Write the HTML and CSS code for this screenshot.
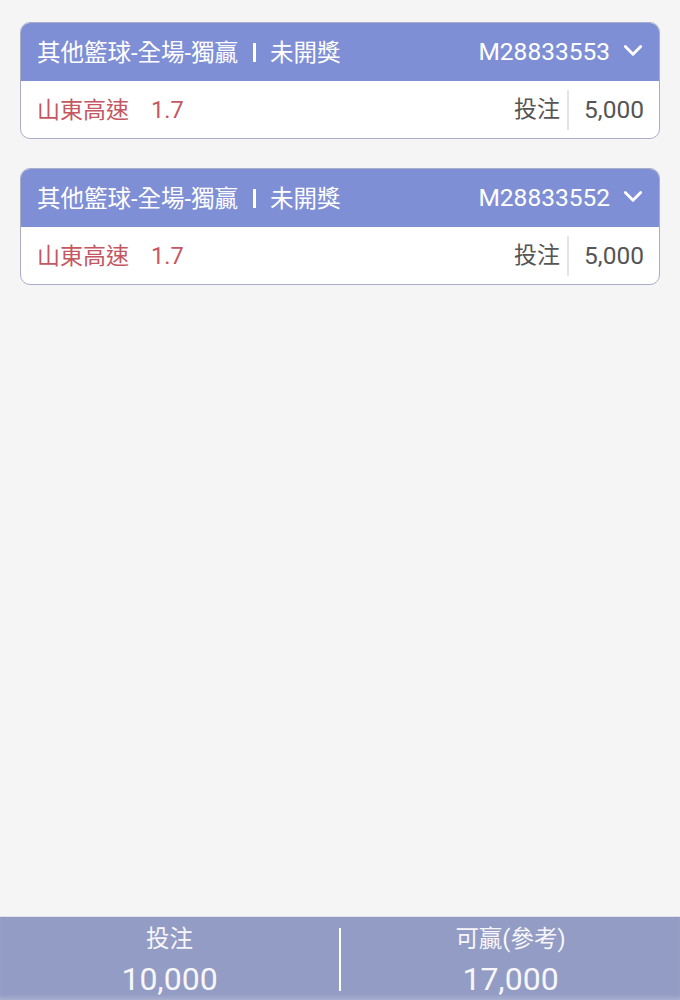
FILE: index.html
```html
<!DOCTYPE html>
<html lang="zh-Hant">
<head>
    <meta charset="UTF-8">
    <meta name="viewport" content="width=device-width, initial-scale=1.0">
    <title>注單</title>
    <link rel="stylesheet" href="styles.css">
</head>
<body>
    <div class="list">
        <div class="card">
            <div class="card-head">
                <span class="title">其他籃球-全場-獨贏<span class="bar"></span>未開獎</span>
                <span class="order">M28833553
                    <svg class="chev" viewBox="0 0 20 20"><path d="M3 6 L10 13 L17 6" /></svg>
                </span>
            </div>
            <div class="card-body">
                <span class="pick">山東高速<span class="odds">1.7</span></span>
                <span class="stake"><span class="label">投注</span><span class="amount">5,000</span></span>
            </div>
        </div>
        <div class="card">
            <div class="card-head">
                <span class="title">其他籃球-全場-獨贏<span class="bar"></span>未開獎</span>
                <span class="order">M28833552
                    <svg class="chev" viewBox="0 0 20 20"><path d="M3 6 L10 13 L17 6" /></svg>
                </span>
            </div>
            <div class="card-body">
                <span class="pick">山東高速<span class="odds">1.7</span></span>
                <span class="stake"><span class="label">投注</span><span class="amount">5,000</span></span>
            </div>
        </div>
    </div>

    <div class="summary">
        <div class="cell">
            <div class="cell-label">投注</div>
            <div class="cell-value">10,000</div>
        </div>
        <div class="divider"></div>
        <div class="cell">
            <div class="cell-label">可贏(參考)</div>
            <div class="cell-value">17,000</div>
        </div>
    </div>
</body>
</html>
```

FILE: styles.css
```css
body {
    margin: 0;
    background-color: #f5f5f6;
    font-family: Roboto, "Noto Sans CJK TC", sans-serif;
    height: 1000px;
    overflow: hidden;
}
.list {
    display: flex;
    flex-direction: column;
    gap: 29px;
    padding: 22px 20px 0 20px;
}
.card {
    border: 1px solid #a9adc8;
    border-radius: 10px;
    background-color: #fff;
    overflow: hidden;
}
.card-head {
    display: flex;
    justify-content: space-between;
    align-items: center;
    height: 58px;
    padding: 0 15px 0 16px;
    background-color: #7f8fd6;
    color: #fff;
}
.title {
    display: flex;
    align-items: center;
    font-size: 23.5px;
    position: relative;
    top: -1px;
}
.bar {
    display: inline-block;
    width: 3px;
    height: 19px;
    background-color: #fff;
    margin: 2px 14px 0 15px;
}
.order {
    display: flex;
    align-items: center;
    gap: 12px;
    font-size: 24.5px;
    position: relative;
    top: -1px;
}
.chev {
    width: 22px;
    height: 22px;
    fill: none;
    stroke: #fff;
    stroke-width: 2.6;
    stroke-linecap: round;
    stroke-linejoin: round;
}
.card-body {
    display: flex;
    justify-content: space-between;
    align-items: center;
    height: 57px;
    padding: 0 15px 0 16px;
    font-size: 23px;
}
.pick {
    color: #c55762;
    position: relative;
    top: -2px;
}
.odds {
    margin-left: 22px;
    font-size: 23.5px;
}
.stake {
    display: flex;
    align-items: center;
    color: #555;
}
.label {
    padding-right: 7px;
    border-right: 2px solid #e3e3e8;
    line-height: 40px;
}
.amount {
    padding-left: 15px;
    font-size: 24.5px;
}
.summary {
    position: fixed;
    left: 0;
    right: 0;
    bottom: 0;
    height: 83px;
    display: flex;
    align-items: center;
    background-color: #939cc4;
    border-top: 1px solid #dfe1ee;
    color: #f7f7fb;
    box-shadow: inset 0 -4px 5px -2px rgba(255, 255, 255, 0.25);
}
.cell {
    flex: 1;
    text-align: center;
    padding-top: 6px;
}
.cell-label {
    font-size: 23.5px;
    line-height: 28px;
}
.cell-value {
    font-size: 32px;
    line-height: 40px;
    margin-top: 6px;
}
.divider {
    width: 2px;
    height: 63px;
    background-color: #fff;
    margin-top: 2px;
}
```
